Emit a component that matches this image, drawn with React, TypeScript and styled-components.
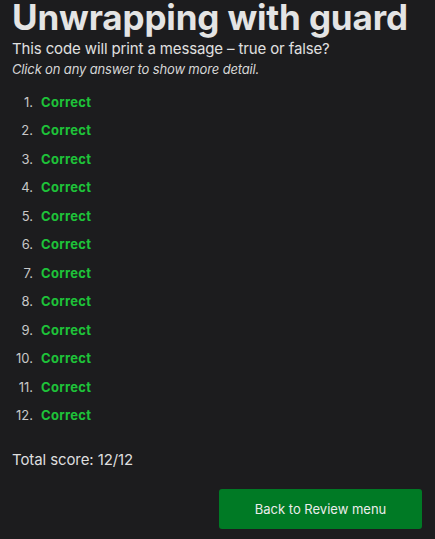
import styled, { createGlobalStyle } from 'styled-components';

const GlobalStyle = createGlobalStyle`
	html, body {
		margin: 0;
		padding: 0;
		background: #1c1c1e;
	}
	body {
		font-family: Inter, 'Noto Sans', sans-serif;
		color: #e2e2e2;
	}
`;

const Page = styled.div`
	display: flex;
	flex-direction: column;
	padding: 0 13px 0 12px;
	min-height: 539px;
	box-sizing: border-box;
`;

const Title = styled.h1`
	margin: 0;
	font-size: 35px;
	line-height: 35px;
	font-weight: 700;
	letter-spacing: -0.15px;
	color: #e4e4e4;
`;

const Subtitle = styled.p`
	margin: 4.5px 0 0;
	font-size: 15px;
	line-height: 18px;
	letter-spacing: -0.13px;
	color: #e0e0e0;
`;

const Hint = styled.p`
	margin: 2px 0 0;
	font-size: 13px;
	line-height: 18px;
	font-style: italic;
	letter-spacing: -0.15px;
	color: #d6d6d6;
`;

const AnswerList = styled.ol`
	list-style: none;
	margin: 10px 0 0;
	padding: 0;
`;

const Answer = styled.li`
	display: grid;
	grid-template-columns: 21px auto;
	column-gap: 8px;
	font-size: 13px;
	line-height: 28.5px;
	cursor: pointer;
`;

const Num = styled.span`
	text-align: right;
	color: #c8c8c8;
`;

const Verdict = styled.span<{ $correct: boolean }>`
	font-weight: 700;
	letter-spacing: 0.3px;
	color: ${(p) => (p.$correct ? '#1ec339' : '#e0443e')};
`;

const Score = styled.p`
	margin: 20px 0 0;
	font-size: 15px;
	line-height: 20px;
	letter-spacing: -0.1px;
	color: #dedede;
`;

const Footer = styled.div`
	display: flex;
	justify-content: flex-end;
	margin-top: 19.5px;
`;

const BackButton = styled.button`
	width: 203px;
	height: 40px;
	border: none;
	border-radius: 3px;
	background: #007a25;
	color: #ececec;
	font-family: inherit;
	font-size: 13px;
	cursor: pointer;
`;

const answers = Array.from({ length: 12 }, () => true);

export default function App() {
	const score = answers.filter(Boolean).length;

	return (
		<>
			<GlobalStyle />
			<Page>
				<Title>Unwrapping with guard</Title>
				<Subtitle>This code will print a message – true or false?</Subtitle>
				<Hint>Click on any answer to show more detail.</Hint>
				<AnswerList>
					{answers.map((ok, i) => (
						<Answer key={i}>
							<Num>{i + 1}.</Num>
							<Verdict $correct={ok}>{ok ? 'Correct' : 'Wrong'}</Verdict>
						</Answer>
					))}
				</AnswerList>
				<Score>
					Total score: {score}/{answers.length}
				</Score>
				<Footer>
					<BackButton>Back to Review menu</BackButton>
				</Footer>
			</Page>
		</>
	);
}
